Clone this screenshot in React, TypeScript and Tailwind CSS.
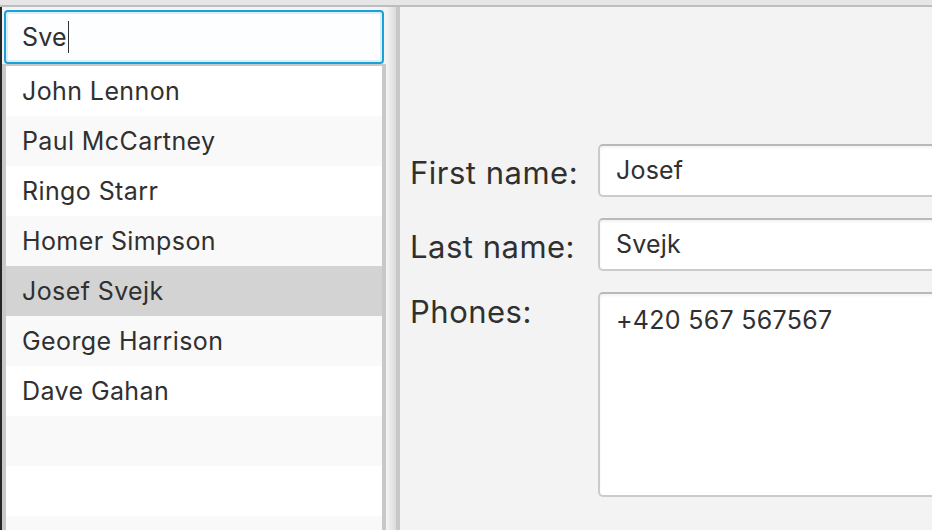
import React from "react";

const people = [
  "John Lennon",
  "Paul McCartney",
  "Ringo Starr",
  "Homer Simpson",
  "Josef Svejk",
  "George Harrison",
  "Dave Gahan",
  "",
  "",
  "",
];

const fieldBox =
  "rounded-[5px] border-2 border-[#cbcbcb] border-t-[#b9b9b9] bg-white shadow-[inset_0_2px_3px_rgba(0,0,0,0.05)]";

export default function App() {
  return (
    <div className="flex h-[530px] w-[932px] flex-col overflow-hidden bg-[#f3f3f3] font-['Inter','Noto_Sans',sans-serif] text-[#303030]">
      <div className="h-[7px] shrink-0 border-b-2 border-[#bdbdbd] bg-[#e6e6e6]" />

      <div className="flex min-h-0 flex-1">
        <div className="w-[2px] shrink-0 bg-[#262626]" />

        {/* search + list */}
        <div className="flex w-[384px] shrink-0 flex-col pt-[3px]">
          <div className="mx-[2px] flex h-[54px] shrink-0 items-center rounded-[4px] border-2 border-[#1ba1d9] bg-[#fcfeff] pl-[16px] shadow-[inset_0_0_0_2px_#dceef8]">
            <span className="text-[25px] leading-none tracking-[0.2px]">Sve</span>
            <span className="ml-px inline-block h-[32px] w-px bg-[#333333]" />
          </div>
          <div className="min-h-0 flex-1 overflow-hidden border-x-4 border-t-2 border-[#c8c8c8]">
            {people.map((name, i) => (
              <div
                key={i}
                className={
                  "flex h-[50px] items-center pl-[16px] pt-[2px] text-[25px] tracking-[0.4px] " +
                  (name === "Josef Svejk"
                    ? "bg-[#d3d3d3]"
                    : i % 2 === 0
                      ? "bg-white"
                      : "bg-[#f9f9f9]")
                }
              >
                {name}
              </div>
            ))}
          </div>
        </div>

        {/* split divider */}
        <div className="flex w-[14px] shrink-0">
          <div className="w-[10px] bg-gradient-to-r from-[#f4f4f4] to-[#dcdcdc]" />
          <div className="w-[4px] bg-[#c8c8c8]" />
        </div>

        {/* detail form */}
        <div className="min-w-0 flex-1 overflow-hidden pl-[10px] pt-[137px]">
          <div className="grid w-[560px] grid-cols-[188px_1fr] gap-y-[21px]">
            <div className="flex h-[53px] items-center pt-[5px] text-[31px] tracking-[0.5px]">First name:</div>
            <div className={fieldBox + " flex h-[53px] items-center pl-[16px] text-[25px] tracking-[0.2px]"}>Josef</div>

            <div className="flex h-[53px] items-center pt-[5px] text-[31px] tracking-[0.5px]">Last name:</div>
            <div className={fieldBox + " flex h-[53px] items-center pl-[16px] text-[25px] tracking-[0.2px]"}>Svejk</div>

            <div className="text-[31px] leading-[40px] tracking-[0.5px]">Phones:</div>
            <div className={fieldBox + " h-[205px] pl-[16px] pt-[11px] text-[25px] leading-[30px] tracking-[0.3px]"}>
              +420 567 567567
            </div>
          </div>
        </div>
      </div>
    </div>
  );
}
